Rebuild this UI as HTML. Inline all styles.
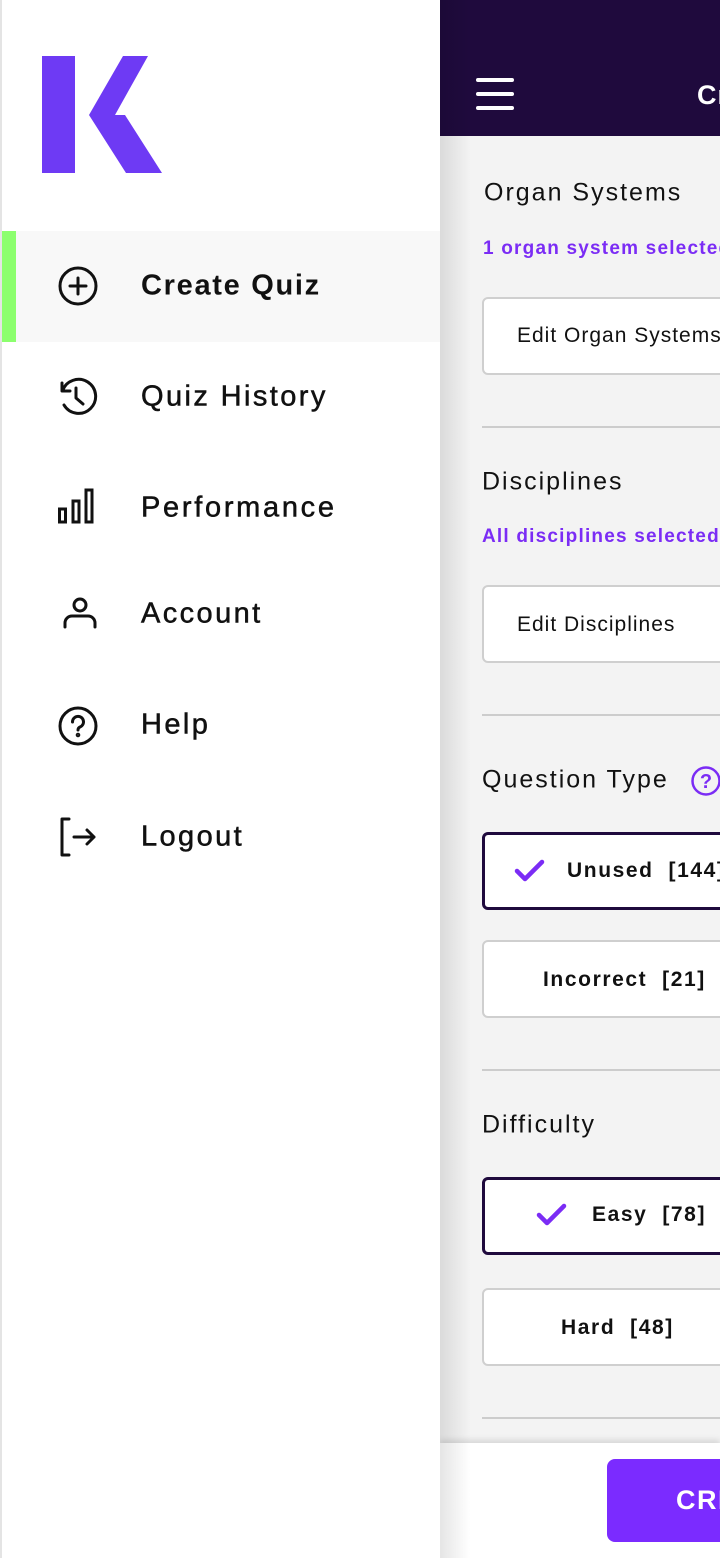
<!DOCTYPE html>
<html><head><meta charset="utf-8"><style>
*{margin:0;padding:0;box-sizing:border-box}
html,body{width:720px;height:1558px;overflow:hidden}
body{position:relative;font-family:"Liberation Sans",sans-serif;background:#f3f3f3}
#wrap{position:absolute;left:0;top:0;width:720px;height:1558px;overflow:hidden}
.a{position:absolute}
#drawer{left:0;top:0;width:440px;height:1558px;background:#fff;border-left:2px solid #e4e4e4;z-index:5}
.mi{position:absolute;left:139px;font-size:29px;letter-spacing:2.4px;color:#111;transform:translateY(-50%);white-space:nowrap}
.ic{position:absolute;left:54px;width:44px;height:44px}
.h{position:absolute;left:482px;font-size:25px;letter-spacing:2px;color:#111;transform:translateY(-50%);white-space:nowrap}
.s{position:absolute;left:483px;font-size:19px;letter-spacing:1.2px;color:#7b2cf5;font-weight:bold;transform:translateY(-50%);white-space:nowrap}
.btn{position:absolute;left:482px;width:300px;height:78px;background:#fff;border:2px solid #cfcfcf;border-radius:6px}
.bt{position:absolute;font-size:21px;letter-spacing:1px;color:#111;transform:translateY(-50%);white-space:nowrap}
.b{font-weight:bold;letter-spacing:1.6px}
.dv{position:absolute;left:482px;width:260px;height:2px;background:#cccccc}
</style></head><body><div id="wrap">
<div class="a" style="left:440px;top:0;width:280px;height:136px;background:#1f0a3d"></div>
<div class="a" style="left:476px;top:78px;width:38px;height:4px;background:#fff;border-radius:2px"></div>
<div class="a" style="left:476px;top:92px;width:38px;height:4px;background:#fff;border-radius:2px"></div>
<div class="a" style="left:476px;top:106px;width:38px;height:4px;background:#fff;border-radius:2px"></div>
<div class="a" style="left:697px;top:80px;color:#fff;font-size:27px;font-weight:bold;letter-spacing:1px">Cr</div>
<div class="a" style="left:440px;top:0;width:30px;height:1558px;background:linear-gradient(to right,rgba(0,0,0,0.1),rgba(0,0,0,0));z-index:4"></div>

<div class="h" style="top:193px;left:484px">Organ Systems</div>
<div class="s" style="top:249px">1 organ system selected</div>
<div class="btn" style="top:297px"></div><div class="bt" style="left:517px;top:336px">Edit Organ Systems</div>
<div class="dv" style="top:426px"></div>

<div class="h" style="top:482px">Disciplines</div>
<div class="s" style="top:537px;left:482px">All disciplines selected</div>
<div class="btn" style="top:585px"></div><div class="bt" style="left:517px;top:625px">Edit Disciplines</div>
<div class="dv" style="top:714px"></div>

<div class="h" style="top:780px">Question Type</div>
<svg class="a" style="left:690px;top:765px" width="32" height="32" viewBox="0 0 32 32"><circle cx="16" cy="16" r="13.5" fill="none" stroke="#7b2cf5" stroke-width="2.5"/><text x="16" y="23" text-anchor="middle" font-size="20" font-weight="bold" fill="#7b2cf5" font-family="Liberation Sans">?</text></svg>
<div class="btn" style="top:832px;border:3px solid #1f0a3d"></div>
<svg class="a" style="left:514px;top:858px" width="32" height="26" viewBox="0 0 32 26"><path d="M3 13 L11 21 L28 4" fill="none" stroke="#7b2cf5" stroke-width="4.5" stroke-linecap="round" stroke-linejoin="round"/></svg>
<div class="bt b" style="left:567px;top:871px">Unused&nbsp; [144]</div>
<div class="btn" style="top:940px"></div><div class="bt b" style="left:543px;top:980px">Incorrect&nbsp; [21]</div>
<div class="dv" style="top:1069px"></div>

<div class="h" style="top:1125px">Difficulty</div>
<div class="btn" style="top:1177px;border:3px solid #1f0a3d"></div>
<svg class="a" style="left:536px;top:1202px" width="32" height="26" viewBox="0 0 32 26"><path d="M3 13 L11 21 L28 4" fill="none" stroke="#7b2cf5" stroke-width="4.5" stroke-linecap="round" stroke-linejoin="round"/></svg>
<div class="bt b" style="left:592px;top:1215px">Easy&nbsp; [78]</div>
<div class="btn" style="top:1288px"></div><div class="bt b" style="left:561px;top:1328px">Hard&nbsp; [48]</div>
<div class="dv" style="top:1417px"></div>

<div class="a" style="left:440px;top:1443px;width:280px;height:115px;background:#fff;box-shadow:0 -3px 6px rgba(0,0,0,0.12)"></div>
<div class="a" style="left:607px;top:1459px;width:200px;height:83px;background:#7b2bff;border-radius:8px"></div>
<div class="a" style="left:676px;top:1485px;color:#fff;font-size:27px;font-weight:bold;letter-spacing:1.5px">CREATE</div>

<div class="a" id="drawer">
<svg class="a" style="left:38px;top:54px" width="128" height="122" viewBox="40 54 128 122"><rect x="42" y="56" width="33" height="117" fill="#6e3af4"/><polygon points="123,56 148,56 115,115 125,115 162,173 126,173 89,115" fill="#6e3af4"/></svg>
<div class="a" style="left:0;top:231px;width:438px;height:111px;background:#f8f8f8"></div>
<div class="a" style="left:0;top:231px;width:14px;height:111px;background:#8cff6e"></div>

<svg class="ic" style="top:264px" viewBox="0 0 44 44" fill="none" stroke="#111" stroke-width="3" stroke-linecap="round"><circle cx="22" cy="22" r="18"/><path d="M22 14v16M14 22h16"/></svg>
<div class="mi" style="top:286px;font-weight:bold;letter-spacing:1.7px">Create Quiz</div>

<svg class="ic" style="top:375px" viewBox="0 0 44 44" fill="none" stroke="#111" stroke-width="3" stroke-linecap="round" stroke-linejoin="round"><path d="M6 8v8h8"/><path d="M6.5 16A17 17 0 1 1 8 30"/><path d="M20 13v10l7 6"/></svg>
<div class="mi" style="top:397px;-webkit-text-stroke:0.5px #111">Quiz History</div>

<svg class="ic" style="top:486px" viewBox="0 0 44 44" fill="none" stroke="#111" stroke-width="3"><rect x="3.5" y="23" width="6" height="13"/><rect x="17" y="15" width="6" height="21"/><rect x="30" y="4" width="6" height="32"/></svg>
<div class="mi" style="top:508px;-webkit-text-stroke:0.5px #111;letter-spacing:2.7px">Performance</div>

<svg class="ic" style="top:592px" viewBox="0 0 44 44" fill="none" stroke="#111" stroke-width="3" stroke-linecap="round"><circle cx="24" cy="13" r="6"/><path d="M9 35v-4a7 7 0 0 1 7-7h16a7 7 0 0 1 7 7v4"/></svg>
<div class="mi" style="top:614px;-webkit-text-stroke:0.5px #111">Account</div>

<svg class="ic" style="top:704px" viewBox="0 0 44 44" fill="none" stroke="#111" stroke-width="3" stroke-linecap="round"><circle cx="22" cy="22" r="18"/><path d="M16.5 18a5.5 5.5 0 1 1 7.5 5c-1.3.6-2 1.5-2 3"/><circle cx="22" cy="31" r="0.8" fill="#111"/></svg>
<div class="mi" style="top:725px;-webkit-text-stroke:0.5px #111">Help</div>

<svg class="ic" style="top:815px" viewBox="0 0 44 44" fill="none" stroke="#111" stroke-width="3" stroke-linecap="round" stroke-linejoin="round"><path d="M13 4H6v36h7"/><path d="M18 22h20M31 15l7 7-7 7"/></svg>
<div class="mi" style="top:837px;-webkit-text-stroke:0.5px #111">Logout</div>
</div>
</div></body></html>
